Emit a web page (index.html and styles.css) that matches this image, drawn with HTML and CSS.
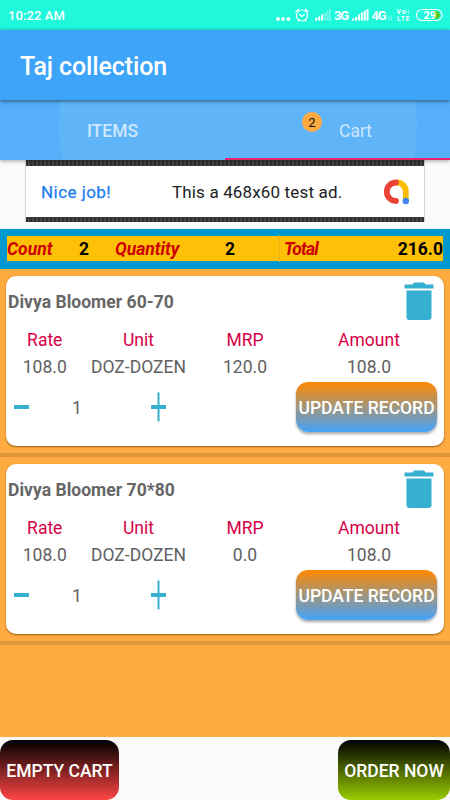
FILE: index.html
```html
<!DOCTYPE html>
<html lang="en">
<head>
<meta charset="utf-8">
<title>Taj collection</title>
<link rel="stylesheet" href="styles.css">
</head>
<body>
<div class="app">
  <div class="status">
    <span class="clock">10:22 AM</span>
    <svg class="status-icons" width="180" height="30" viewBox="0 0 180 30">
      <g fill="#fff">
        <circle cx="8" cy="19" r="1.900"/><circle cx="13" cy="19" r="1.900"/><circle cx="18.500" cy="19" r="1.900"/>
        <path d="M45 18.500l2.200-1V20.500H45zM48 17l2.200-1v4.500H48zM51 15l2.200-1v6.500H51z"/>
        <path opacity=".35" d="M54 13h2v7.500h-2zM56.500 11h2v9.500h-2zM59 9h2v11.500h-2z"/>
        <path d="M82 19l2.200-1V20.500H82zM85 17.500l2.200-1v4H85zM88 15l2.200-1v6.500H88zM91 12.500h2v8h-2zM93.800 10.500h2v10h-2zM96.500 9h2v11.500h-2z"/>
      </g>
      <g fill="none" stroke="#fff" stroke-width="1.200" stroke-linecap="round">
        <circle cx="32" cy="15.500" r="5.500"/><path d="M25.800 11.500l3-2.300M38.200 11.500l-3-2.300M29.500 14.500l2.500 2 2.500-2M28 21l1-1M36 21l-1-1"/>
        <rect x="146.500" y="9.500" width="25.500" height="11" rx="5.500"/>
        <path stroke-width=".5" d="M118.800 16v4M121.200 16v4M136.300 10.500q1 1.500 0 3M138.300 9.500q1.500 2.500 0 5"/>
      </g>
      <path fill="#58c91e" d="M164 11.500h2.500a3.500 3.500 0 0 1 0 7H164z"/>
      <g class="status-text">
        <text x="64" y="20" textLength="15">3G</text>
        <text x="101.500" y="20" textLength="15">4G</text>
        <text class="tiny" x="126.500" y="13.500" textLength="9">Vo</text>
        <text class="tiny" x="127" y="21" textLength="12.500">LTE</text>
        <text class="level" x="153.500" y="19">29</text>
      </g>
    </svg>
  </div>
  <header class="appbar">Taj collection</header>
  <nav class="tabs">
    <div class="tab tab-items"><span>ITEMS</span></div>
    <div class="tab tab-cart"><span class="badge">2</span><span>Cart</span></div>
  </nav>
  <div class="ad-row">
    <div class="ad">
      <span class="nice">Nice job!</span>
      <span class="test">This a 468x60 test ad.</span>
      <svg class="admob" width="28" height="28" viewBox="0 0 28 28" fill="none" stroke-width="5.800" stroke-linecap="round">
        <path stroke="#fbbc04" stroke-linecap="butt" d="M13.800 4.500a9 9 0 0 1 9 9V23"/>
        <path stroke="#ea4335" d="M13 4.500a9.250 9.250 0 0 0 0 18.500"/>
        <circle cx="22.800" cy="23" r="3.200" fill="#4285f4"/>
      </svg>
    </div>
  </div>
  <div class="summary">
    <div class="summary-in">
      <span class="key k1">Count</span><b class="v1">2</b><span class="key k2">Quantity</span><b class="v2">2</b><span class="key k3">Total</span><b class="v3">216.0</b>
    </div>
  </div>
  <main class="list">
    <section class="row">
      <article class="card">
        <div class="head"><h2>Divya Bloomer 60-70</h2>
          <svg class="trash" width="30" height="38" viewBox="0 0 30 38"><path d="M.5 2.500h8Q9 .5 11 .5h8q2 0 2.500 2h8v4H.5zM2.500 8.500h25V35a3 3 0 0 1-3 3h-19a3 3 0 0 1-3-3z"/></svg>
        </div>
        <div class="cols labels"><span>Rate</span><span>Unit</span><span>MRP</span><span>Amount</span></div>
        <div class="cols values"><span>108.0</span><span>DOZ-DOZEN</span><span>120.0</span><span>108.0</span></div>
        <div class="actions">
          <svg class="minus" width="15" height="30" viewBox="0 0 15 30"><path d="M0 13h15v4H0z"/></svg>
          <span class="qty">1</span>
          <svg class="plus" width="15" height="30" viewBox="0 0 15 30"><path d="M0 13h15v4H0zM6.500 0.500h2v29h-2z"/></svg>
          <button class="update">UPDATE RECORD</button>
        </div>
      </article>
    </section>
    <section class="row">
      <article class="card">
        <div class="head"><h2>Divya Bloomer 70*80</h2>
          <svg class="trash" width="30" height="38" viewBox="0 0 30 38"><path d="M.5 2.500h8Q9 .5 11 .5h8q2 0 2.500 2h8v4H.5zM2.500 8.500h25V35a3 3 0 0 1-3 3h-19a3 3 0 0 1-3-3z"/></svg>
        </div>
        <div class="cols labels"><span>Rate</span><span>Unit</span><span>MRP</span><span>Amount</span></div>
        <div class="cols values"><span>108.0</span><span>DOZ-DOZEN</span><span>0.0</span><span>108.0</span></div>
        <div class="actions">
          <svg class="minus" width="15" height="30" viewBox="0 0 15 30"><path d="M0 13h15v4H0z"/></svg>
          <span class="qty">1</span>
          <svg class="plus" width="15" height="30" viewBox="0 0 15 30"><path d="M0 13h15v4H0zM6.500 0.500h2v29h-2z"/></svg>
          <button class="update">UPDATE RECORD</button>
        </div>
      </article>
    </section>
  </main>
  <footer class="bottom">
    <button class="empty">EMPTY CART</button>
    <button class="order">ORDER NOW</button>
  </footer>
</div>
</body>
</html>
```
FILE: styles.css
```css
* { box-sizing: border-box; }
body { margin: 0; font-family: Roboto, "Liberation Sans", sans-serif; }
button { border: 0; padding: 3px 0 0; font: 500 17.5px/1 Roboto, sans-serif; color: #fff; white-space: nowrap; }
.app { width: 450px; height: 800px; overflow: hidden; display: flex; flex-direction: column; background: #fafafa; }
.app > * { flex-shrink: 0; }

.status { height: 30px; background: #20f8dc; display: flex; align-items: center; justify-content: space-between; }
.clock { padding-left: 8px; color: #fff; font-size: 13px; font-weight: 500; letter-spacing: .1px; }
.status-text { fill: #fff; font: 700 13px Roboto, sans-serif; }
.status-text .tiny { font-size: 6.500px; }
.status-text .level { font-size: 11px; }

.appbar { height: 70px; padding-left: 20px; background: #3da4f9; color: #fff; font-size: 25px; font-weight: 500; line-height: 73px; letter-spacing: -.12px; position: relative; z-index: 3; box-shadow: 0 1px 4px rgba(0, 0, 0, .55); }
.tabs { height: 60px; display: flex; position: relative; z-index: 2; color: rgba(255, 255, 255, .7); font-size: 17.5px; background: radial-gradient(circle at 238px 25px, #60b5f9 178.5px, #55aff9 179.5px); box-shadow: 0 1px 4px rgba(0, 0, 0, .35); }
.tab { width: 225px; display: flex; align-items: center; justify-content: center; padding-top: 2px; }
.tab-items { font-weight: 500; }
.tab-cart { justify-content: flex-start; padding-left: 77px; gap: 17px; border-bottom: 2px solid #e6246d; padding-top: 4px; }
.badge { width: 20px; height: 20px; margin-top: -18px; border-radius: 50%; background: #ffaa40; color: #111; font-size: 13px; line-height: 21px; text-align: center; }

.ad-row { height: 69px; padding: 0 25px; }
.ad { height: 62px; padding: 6px 0 5px 15px; display: flex; align-items: center; border: 1px solid #cfd3d5; border-width: 0 1px;
  background: linear-gradient(#fff, #fff) 0 6px / 100% 51px no-repeat, repeating-linear-gradient(90deg, #303030 0 2px, #444 2px 4px); }
.ad span { font-size: 17px; white-space: nowrap; }
.nice { width: 131px; color: #1a7cf2; letter-spacing: .45px; -webkit-text-stroke: .25px #1a7cf2; }
.test { width: 211px; color: #202124; letter-spacing: .15px; }

.summary { height: 40px; padding: 7px 7px 8px; background: #0099cf; }
.summary-in { height: 25px; background: #ffc107; display: flex; align-items: center; font-size: 17.5px; line-height: 25px; }
.summary-in > * { padding-top: 2px; }
.summary-in b { font-weight: 700; color: #000; }
.key { color: #cc0000; font-weight: 700; font-style: italic; }
.k1 { width: 72px; }
.v1 { width: 36px; }
.k2 { width: 110px; }
.v2 { width: 54px; }
.k3 { padding-left: 4px; border-left: 1px solid #f2b512; letter-spacing: -.8px; }
.v3 { margin-left: auto; }

.list { height: 468px; background: #ffab40; }
.row { height: 188px; padding: 7px 6px 0; border-bottom: 4px solid #de963b; }
.card { height: 170px; background: #fff; border-radius: 10px; box-shadow: 0 1px 2px rgba(100, 60, 0, .7); color: #616161; }
.head { height: 50px; display: flex; justify-content: space-between; padding: 6px 10px 0 2px; }
.head h2 { margin: 0; font-size: 17.5px; font-weight: 700; line-height: 40px; color: #666; letter-spacing: .03px; }
.card svg { fill: #35b0d0; }
.cols { display: grid; grid-template-columns: 77.5px 110px 103px 145px; height: 27px; line-height: 28px; text-align: center; font-size: 17.5px; white-space: nowrap; }
.labels { color: #d50045; }
.actions { display: flex; align-items: center; height: 54px; padding-left: 8px; }
.qty { width: 122px; padding: 2px 0 0 43px; font-size: 17.5px; }
.update { width: 141px; height: 50px; margin-left: auto; margin-right: 7px; border-radius: 12px; background: linear-gradient(#ff8800, #43a3fb); box-shadow: 0 2px 3px rgba(0, 0, 0, .35); }

.bottom { height: 63px; padding-top: 3px; display: flex; justify-content: space-between; }
.bottom button { height: 60px; border-radius: 13px; padding-top: 4px; }
.empty { width: 119px; background: linear-gradient(#000, #ff4444); }
.order { width: 112px; background: linear-gradient(#000, #99cc00); }
```
